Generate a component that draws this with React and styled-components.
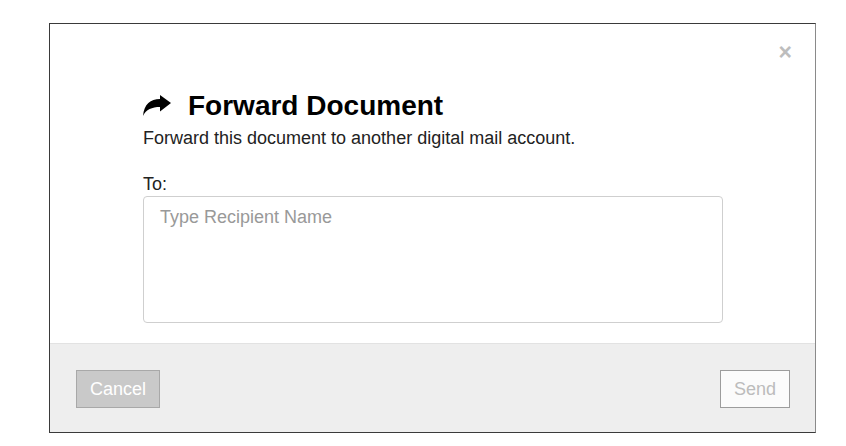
import React from 'react';
import styled, { createGlobalStyle } from 'styled-components';

const GlobalStyle = createGlobalStyle`
  * {
    box-sizing: border-box;
  }
  body {
    margin: 0;
    background: #fff;
    font-family: 'Liberation Sans', Arial, sans-serif;
  }
`;

const Modal = styled.div`
  width: 767px;
  margin: 23px 0 0 49px;
  display: flex;
  flex-direction: column;
  border: 1px solid #3a3a3a;
  border-right-color: #8a8a8a;
  background: #fff;
`;

const Body = styled.div`
  padding: 18px 0 20px;
`;

const CloseRow = styled.div`
  display: flex;
  justify-content: flex-end;
  padding-right: 23px;
`;

const Close = styled.button`
  border: 0;
  background: none;
  padding: 0;
  height: 20px;
  font-family: 'Liberation Sans', Arial, sans-serif;
  font-size: 23px;
  font-weight: bold;
  line-height: 20px;
  color: #bdbdbd;
  cursor: pointer;
`;

const Content = styled.div`
  margin-top: 28px;
  padding: 0 92px 0 93px;
  display: flex;
  flex-direction: column;
`;

const Title = styled.h2`
  margin: 0;
  display: flex;
  align-items: center;
  gap: 17px;
  font-size: 28px;
  line-height: 32px;
  font-weight: bold;
  color: #000;
  svg {
    margin-top: -1px;
  }
`;

const Subtitle = styled.p`
  margin: 6px 0 0;
  font-size: 18px;
  line-height: 20px;
  color: #222;
`;

const Label = styled.label`
  margin-top: 26px;
  font-size: 18px;
  line-height: 20px;
  color: #222;
`;

const Recipient = styled.textarea`
  margin-top: 2px;
  height: 127px;
  width: 100%;
  resize: none;
  border: 1px solid #cfcfcf;
  border-radius: 4px;
  padding: 10px 16px;
  font-family: 'Liberation Sans', Arial, sans-serif;
  font-size: 18px;
  line-height: 20px;
  color: #222;
  outline: none;
  &::placeholder {
    color: #999;
  }
`;

const Footer = styled.div`
  display: flex;
  justify-content: space-between;
  align-items: center;
  padding: 26px 25px 24px 26px;
  background: #eeeeee;
  border-top: 1px solid #e2e2e2;
`;

const Button = styled.button`
  height: 38px;
  padding: 0 13px;
  font-family: 'Liberation Sans', Arial, sans-serif;
  font-size: 18px;
  border-radius: 0;
  cursor: default;
  background: ${(p) => (p.primary ? '#fbfbfb' : '#c9c9c9')};
  color: ${(p) => (p.primary ? '#bcbcbc' : '#fff')};
  border: 1px solid ${(p) => (p.primary ? '#9c9c9c' : '#a8a8a8')};
`;

const ForwardIcon = () => (
  <svg width="28" height="21" viewBox="0 0 28 21">
    <path
      d="M28 8 L17 0 V4 C7.5 4 1.2 9 0 21 C3 14.5 9 12 17 12 V16.5 Z"
      fill="#000"
    />
  </svg>
);

export default function App() {
  return (
    <>
      <GlobalStyle />
      <Modal>
        <Body>
          <CloseRow>
            <Close type="button">×</Close>
          </CloseRow>
          <Content>
            <Title>
              <ForwardIcon />
              Forward Document
            </Title>
            <Subtitle>Forward this document to another digital mail account.</Subtitle>
            <Label htmlFor="to">To:</Label>
            <Recipient id="to" placeholder="Type Recipient Name" />
          </Content>
        </Body>
        <Footer>
          <Button type="button">Cancel</Button>
          <Button type="button" primary>
            Send
          </Button>
        </Footer>
      </Modal>
    </>
  );
}
